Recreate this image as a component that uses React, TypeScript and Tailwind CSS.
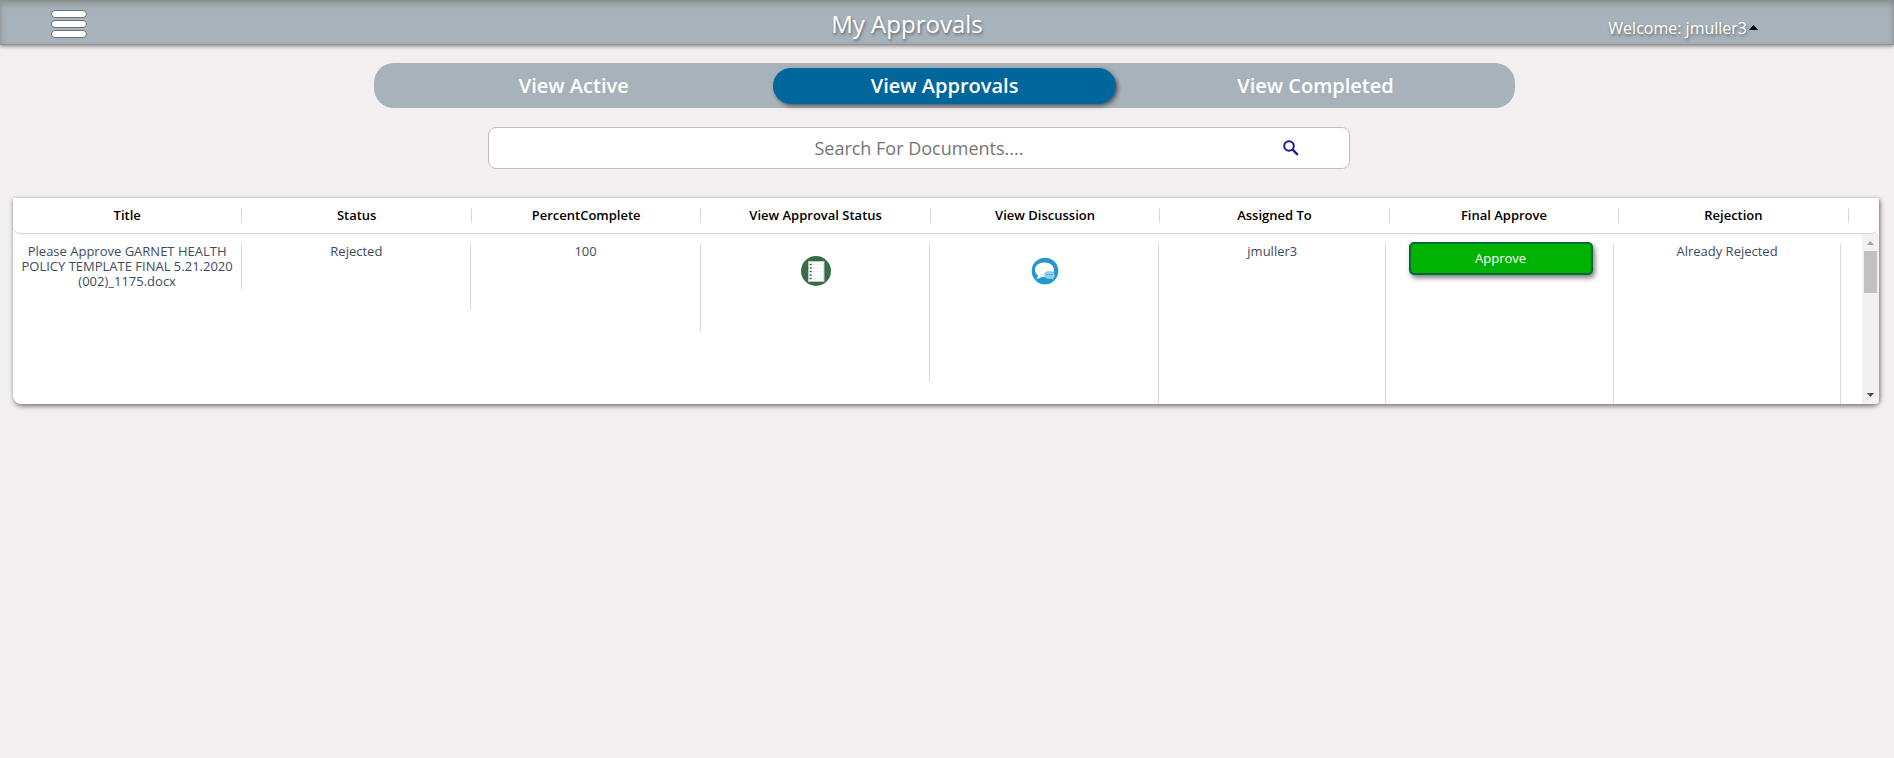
import type { ReactNode } from 'react';

type Column = {
  label: string;
  cell: ReactNode;
  /** Width and separator height of the body cell. */
  body: string;
};

function ChecklistIcon() {
  return (
    <svg viewBox="0 0 30 30" className="size-[30px]" aria-hidden="true">
      <circle cx="15" cy="15" r="15" fill="#386c48" />
      <rect x="7.5" y="5.5" width="15.5" height="20" fill="#fff" stroke="#b7c9bc" strokeWidth="1" />
      <path d="M8 8.5h14M8 12h14M8 15.5h14M8 19h14M8 22.5h14" stroke="#ececec" strokeWidth="0.8" />
      <path d="M8.7 8.5h2M8.7 12h2M8.7 15.5h2M8.7 19h2M8.7 22.5h2" stroke="#386c48" strokeWidth="1.7" />
    </svg>
  );
}

function DiscussionIcon() {
  return (
    <svg viewBox="0 0 28 28" className="size-7" aria-hidden="true">
      <circle cx="14" cy="14" r="13.3" fill="#2497d0" />
      <path
        d="M13.5 5.5c-5.6 0-9.5 3-9.5 7.3 0 2.500 1 4.300 3 5.600 0 1.500-.8 2.400-1.800 3.200 2.500 0 4.300-.7 5.600-1.900 1 .2 1.800.2 2.700.2 5.600 0 9.500-3 9.500-7.100s-3.900-7.300-9.500-7.300z"
        fill="#fff"
      />
      <path
        d="M18 14c-3 0-5 1.600-5 3.900s2 3.900 5 3.900c.7 0 1.300 0 1.800-.2.800.7 1.800 1.100 3.100 1.100-.5-.5-.8-1-.8-1.700 1-.7 1.500-1.800 1.500-3.100 0-2.300-2.600-3.900-5.600-3.900z"
        fill="#8fd0ee"
      />
      <path d="M15.500 17.600h1.300M17.900 17.600h1.300M20.300 17.600h1.300" stroke="#2497d0" strokeWidth="1" />
    </svg>
  );
}

const columns: Column[] = [
  {
    label: 'Title',
    cell: 'Please Approve GARNET HEALTH POLICY TEMPLATE FINAL 5.21.2020 (002)_1175.docx',
    body: 'w-[12.4%] h-[45px] px-2',
  },
  { label: 'Status', cell: 'Rejected', body: 'w-[12.4%] h-[66px]' },
  { label: 'PercentComplete', cell: '100', body: 'w-[12.4%] h-[87px]' },
  {
    label: 'View Approval Status',
    cell: (
      <button type="button" aria-label="View approval status" className="mt-3">
        <ChecklistIcon />
      </button>
    ),
    body: 'w-[12.4%] h-[138px] pl-0.5',
  },
  {
    label: 'View Discussion',
    cell: (
      <button type="button" aria-label="View discussion" className="mt-[13px]">
        <DiscussionIcon />
      </button>
    ),
    body: 'w-[12.4%] h-[160px] pl-0.5',
  },
  { label: 'Assigned To', cell: 'jmuller3', body: 'w-[12.3%] h-[160px]' },
  {
    label: 'Final Approve',
    cell: (
      <button
        type="button"
        className="-mt-0.5 h-[33px] w-[82%] rounded-[5px] border-2 border-[#00693e] bg-[#00b300] font-medium text-white shadow-[2px_3px_5px_rgba(0,0,0,0.5)]"
      >
        Approve
      </button>
    ),
    body: 'w-[12.3%] h-[160px] pl-0.5',
  },
  { label: 'Rejection', cell: 'Already Rejected', body: 'w-[12.3%] h-[160px]' },
];

const tabs = ['View Active', 'View Approvals', 'View Completed'];

function Header() {
  return (
    <header className="grid h-[45px] grid-cols-[1fr_auto_1fr] items-center border-b border-[#8f9598] bg-[#a8b2ba] pt-[3px] shadow-[0_1px_4px_rgba(0,0,0,0.5),inset_0_3px_6px_rgba(110,110,105,0.6)]">
      <button type="button" aria-label="Menu" className="ml-[51px] flex w-9 flex-col gap-0.5">
        <span className="h-2 rounded-full border border-[#6b7176] bg-white" />
        <span className="h-2 rounded-full border border-[#6b7176] bg-white" />
        <span className="h-2 rounded-full border border-[#6b7176] bg-white" />
      </button>
      <h1 className="mr-20 text-[24px] leading-8 text-white [text-shadow:1px_2px_3px_rgba(0,0,0,0.4)]">
        My Approvals
      </h1>
      <button
        type="button"
        className="mr-[136px] flex items-center gap-0.5 justify-self-end pt-2 text-[16px] leading-6 text-white [text-shadow:1px_2px_3px_rgba(0,0,0,0.4)]"
      >
        Welcome: jmuller3
        <svg viewBox="0 0 9 5" className="h-[5px] w-[9px]" aria-hidden="true">
          <path d="M4.500 0 9 5H0z" fill="#000" />
        </svg>
      </button>
    </header>
  );
}

function Tabs() {
  return (
    <nav className="mt-[18px] ml-[19.75%] flex h-[45px] w-[60.25%] items-center justify-evenly rounded-[20px] bg-[#a8b2ba] text-[20px] font-semibold text-white">
      {tabs.map((tab) => (
        <button
          key={tab}
          type="button"
          className={
            tab === 'View Approvals'
              ? 'h-9 w-[30%] rounded-full bg-[#00669b] shadow-[2px_2px_4px_rgba(0,0,0,0.5)]'
              : 'h-9 w-[30%] rounded-full'
          }
        >
          {tab}
        </button>
      ))}
    </nav>
  );
}

function Search() {
  return (
    <form
      role="search"
      className="mt-[19px] ml-[25.77%] grid h-[42px] w-[45.5%] grid-cols-[1fr_auto] items-center rounded-[8px] border border-[#bdbdbf] bg-white"
    >
      <input
        type="text"
        aria-label="Search for documents"
        placeholder="Search For Documents...."
        className="col-start-1 col-end-3 row-start-1 h-full bg-transparent text-center text-[18px] outline-none placeholder:text-[#757575]"
      />
      <button type="button" aria-label="Search" className="col-start-2 row-start-1 mr-[50px]">
        <svg viewBox="0 0 16 16" className="size-4" fill="none" stroke="#1c1c8c" aria-hidden="true">
          <circle cx="6" cy="6" r="4.800" strokeWidth="2" />
          <path d="m9.500 9.500 5.300 5.300" strokeWidth="2.400" />
        </svg>
      </button>
    </form>
  );
}

function Scrollbar() {
  return (
    <div className="flex flex-col items-center rounded-br-[4px] bg-[#f1f1f1]" aria-hidden="true">
      <svg viewBox="0 0 17 17" className="size-[17px]">
        <path d="M5 11h7L8.500 7z" fill="#a3a3a3" />
      </svg>
      <div className="h-[42px] w-[13px] bg-[#c1c1c1]" />
      <svg viewBox="0 0 17 17" className="mt-auto size-[17px]">
        <path d="M5 6h7L8.500 10z" fill="#505050" />
      </svg>
    </div>
  );
}

function ApprovalsTable() {
  return (
    <section className="mt-[29px] ml-[13px] grid w-[98.5%] grid-cols-[1fr_17px] rounded-b-[8px] bg-white shadow-[1px_2px_5px_rgba(0,0,0,0.55)]">
      <table className="contents">
        <thead className="col-span-2 block rounded-b-[8px] border-b border-[#d6d6d6] shadow-[0_0_3px_rgba(0,0,0,0.12)]">
          <tr className="flex py-[10px]">
            {columns.map((column) => (
              <th
                key={column.label}
                scope="col"
                className="w-[12.3%] border-r border-[#d9d9d9] text-[13px] leading-[15px] font-semibold text-black"
              >
                {column.label}
              </th>
            ))}
          </tr>
        </thead>
        <tbody className="block h-[170px] overflow-hidden">
          <tr className="flex items-start pt-[10px]">
            {columns.map((column) => (
              <td key={column.label} className={`${column.body} border-r border-[#d9d9d9] text-center`}>
                {column.cell}
              </td>
            ))}
          </tr>
        </tbody>
      </table>
      <Scrollbar />
    </section>
  );
}

export default function App() {
  return (
    <div className="min-h-screen bg-[#f3eff0] font-['Trebuchet_MS','Open_Sans',sans-serif] text-[13px] leading-[15px] text-[#3f4a5c]">
      <Header />
      <main>
        <Tabs />
        <Search />
        <ApprovalsTable />
      </main>
    </div>
  );
}
